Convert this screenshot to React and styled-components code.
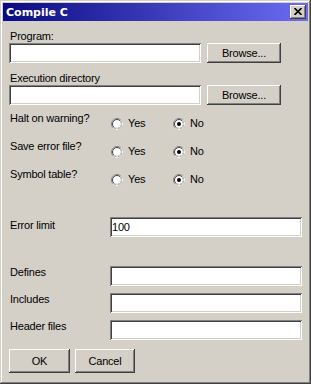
import React, { useState } from 'react'
import styled, { createGlobalStyle } from 'styled-components'

const GlobalStyle = createGlobalStyle`
  html, body {
    margin: 0;
    padding: 0;
    background: #d4d0c8;
  }
  * { box-sizing: border-box; }
`

const raised = `
  box-shadow: inset -1px -1px 0 #404040, inset 1px 1px 0 #ffffff,
    inset -2px -2px 0 #808080, inset 2px 2px 0 #d4d0c8;
`

const Window = styled.div`
  width: 311px;
  height: 384px;
  padding: 3px;
  background: #d4d0c8;
  box-shadow: inset -1px -1px 0 #404040, inset 1px 1px 0 #d4d0c8,
    inset -2px -2px 0 #808080, inset 2px 2px 0 #ffffff;
  font-family: "Liberation Sans", Arial, sans-serif;
  font-size: 11px;
  letter-spacing: -0.2px;
  color: #000;
  display: flex;
  flex-direction: column;
`

const TitleBar = styled.div`
  height: 18px;
  display: flex;
  align-items: center;
  justify-content: space-between;
  padding: 0 2px 0 3px;
  background: linear-gradient(to right, #0a0a80, #6c6cf4);
`

const TitleText = styled.span`
  font-family: "DejaVu Sans", Verdana, sans-serif;
  font-weight: bold;
  font-size: 11px;
  letter-spacing: 0;
  color: #fff;
`

const CloseButton = styled.div`
  width: 16px;
  height: 14px;
  background: #d4d0c8;
  ${raised}
  display: flex;
  align-items: center;
  justify-content: center;
  padding-bottom: 1px;
`

const Body = styled.div`
  padding: 9px 6px 0 6px;
  display: flex;
  flex-direction: column;
`

const Label = styled.div`
  line-height: 13px;
  height: 13px;
  padding-left: 1px;
  padding-top: ${p => p.$top || 0}px;
  white-space: nowrap;
`

const BrowseRow = styled.div`
  display: flex;
  gap: 6px;
  margin-bottom: ${p => p.$after || 0}px;
`

const TextBox = styled.input`
  width: ${p => p.$w || 192}px;
  height: 20px;
  border: none;
  outline: none;
  margin: 0;
  padding: 0 2px 0 2px;
  background: #fff;
  box-shadow: inset 1px 1px 0 #808080, inset -1px -1px 0 #ffffff,
    inset 2px 2px 0 #404040, inset -2px -2px 0 #d4d0c8;
  font-family: "Liberation Sans", Arial, sans-serif;
  font-size: 11px;
  letter-spacing: -0.2px;
  color: #000;
`

const Button = styled.button`
  width: ${p => p.$w}px;
  height: ${p => p.$h}px;
  border: none;
  margin: 0;
  padding: 0;
  background: #d4d0c8;
  ${raised}
  font-family: "Liberation Sans", Arial, sans-serif;
  font-size: 11px;
  letter-spacing: -0.2px;
  color: #000;
  display: flex;
  align-items: center;
  justify-content: center;
`

const OptionRow = styled.div`
  display: grid;
  grid-template-columns: 101px 1fr;
  height: ${p => p.$h || 28}px;
`

const RadioGroup = styled.div`
  display: flex;
  padding-top: 5px;
  padding-left: 1px;
  align-items: flex-start;
`

const RadioItem = styled.label`
  display: flex;
  align-items: center;
  gap: 5px;
  width: ${p => p.$w || 62}px;
  line-height: 13px;
  height: 13px;
`

const FieldRow = styled.div`
  display: grid;
  grid-template-columns: 101px 192px;
  margin-top: ${p => p.$mt || 0}px;
`

const Footer = styled.div`
  display: flex;
  gap: 5px;
  margin-top: 9px;
`

function Radio({ checked }) {
  return (
    <svg width="12" height="12" viewBox="0 0 12 12">
      <circle cx="6" cy="6" r="5.5" fill="#fff" stroke="#808080" />
      <path d="M9.89 2.11 A5.5 5.5 0 0 1 2.11 9.89" fill="none" stroke="#ffffff" />
      <circle cx="6" cy="6" r="4.5" fill="none" stroke="#404040" />
      <path d="M9.18 2.82 A4.5 4.5 0 0 1 2.82 9.18" fill="none" stroke="#d4d0c8" />
      {checked && <circle cx="6" cy="6" r="2" fill="#000" />}
    </svg>
  )
}

function YesNo({ label, value, onChange }) {
  return (
    <OptionRow>
      <Label>{label}</Label>
      <RadioGroup>
        <RadioItem onClick={() => onChange(true)}>
          <Radio checked={value} />
          <span>Yes</span>
        </RadioItem>
        <RadioItem onClick={() => onChange(false)}>
          <Radio checked={!value} />
          <span>No</span>
        </RadioItem>
      </RadioGroup>
    </OptionRow>
  )
}

export default function App() {
  const [halt, setHalt] = useState(false)
  const [saveErr, setSaveErr] = useState(false)
  const [symbols, setSymbols] = useState(false)

  return (
    <>
      <GlobalStyle />
      <Window>
        <TitleBar>
          <TitleText>Compile C</TitleText>
          <CloseButton>
            <svg width="8" height="7" viewBox="0 0 8 7">
              <path d="M0.5 0 L7.5 7 M7.5 0 L0.5 7" stroke="#000" strokeWidth="1.6" />
            </svg>
          </CloseButton>
        </TitleBar>
        <Body>
          <Label>Program:</Label>
          <BrowseRow $after={9}>
            <TextBox />
            <Button $w={74} $h={20}>Browse...</Button>
          </BrowseRow>
          <Label>Execution directory</Label>
          <BrowseRow $after={7}>
            <TextBox />
            <Button $w={74} $h={20}>Browse...</Button>
          </BrowseRow>

          <YesNo label="Halt on warning?" value={halt} onChange={setHalt} />
          <YesNo label="Save error file?" value={saveErr} onChange={setSaveErr} />
          <YesNo label="Symbol table?" value={symbols} onChange={setSymbols} />

          <FieldRow $mt={21}>
            <Label $top={2}>Error limit</Label>
            <TextBox defaultValue="100" />
          </FieldRow>
          <FieldRow $mt={29}>
            <Label>Defines</Label>
            <TextBox />
          </FieldRow>
          <FieldRow $mt={7}>
            <Label>Includes</Label>
            <TextBox />
          </FieldRow>
          <FieldRow $mt={7}>
            <Label>Header files</Label>
            <TextBox />
          </FieldRow>

          <Footer>
            <Button $w={61} $h={24}>OK</Button>
            <Button $w={60} $h={24}>Cancel</Button>
          </Footer>
        </Body>
      </Window>
    </>
  )
}
